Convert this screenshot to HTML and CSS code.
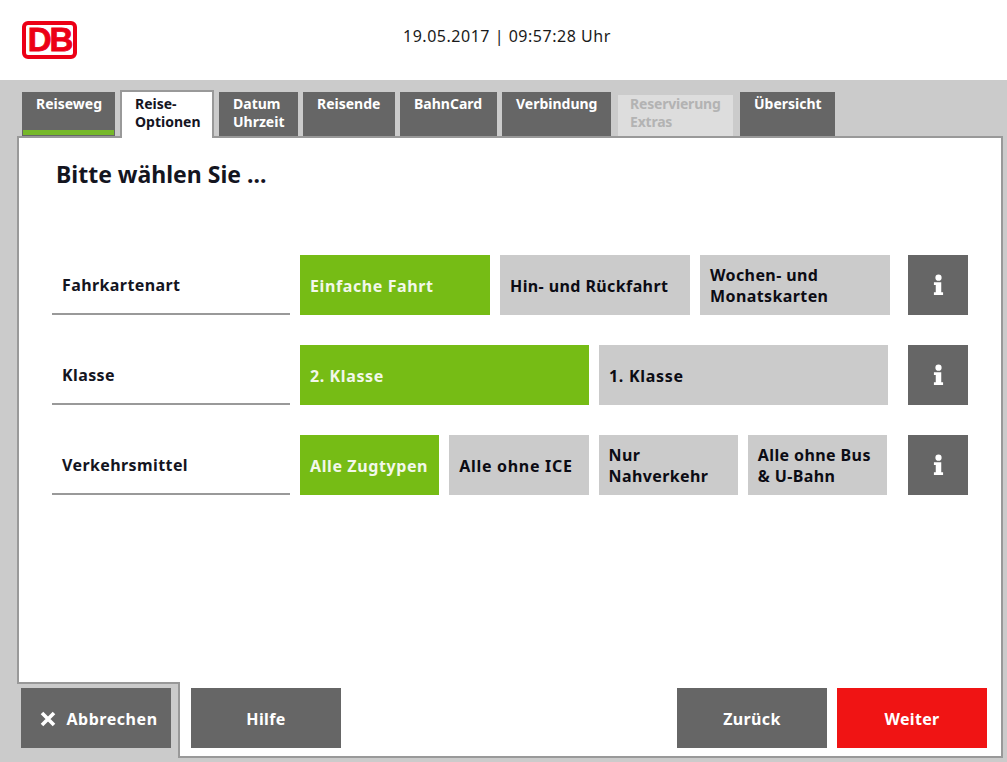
FILE: index.html
```html
<!DOCTYPE html>
<html lang="de">
<head>
<meta charset="utf-8">
<title>Reise-Optionen</title>
<link rel="stylesheet" href="styles.css">
</head>
<body>
<header class="top">
  <div class="logo">DB</div>
  <div class="clock">19.05.2017 | 09:57:28 Uhr</div>
</header>
<nav class="tabs">
  <div class="tab tab-done t1">Reiseweg</div>
  <div class="tab tab-active t2">Reise-<br>Optionen</div>
  <div class="tab t3">Datum<br>Uhrzeit</div>
  <div class="tab t4">Reisende</div>
  <div class="tab t5">BahnCard</div>
  <div class="tab t6">Verbindung</div>
  <div class="tab tab-disabled t7">Reservierung<br>Extras</div>
  <div class="tab t8">Übersicht</div>
</nav>
<main class="panel">
  <div class="notch"></div>
  <h1 class="title">Bitte wählen Sie ...</h1>
  <section class="rows">
    <div class="row">
      <div class="label">Fahrkartenart</div>
      <div class="options wide cols3">
        <div class="opt on single">Einfache Fahrt</div>
        <div class="opt single">Hin- und Rückfahrt</div>
        <div class="opt">Wochen- und<br>Monatskarten</div>
      </div>
      <div class="info"><svg viewBox="0 0 12 24" class="info-icon"><circle cx="6" cy="4" r="3.4"/><path d="M1 9h8v11h2v3H1v-3h2v-8H1z"/></svg></div>
    </div>
    <div class="row">
      <div class="label">Klasse</div>
      <div class="options cols2">
        <div class="opt on single">2. Klasse</div>
        <div class="opt single loose">1. Klasse</div>
      </div>
      <div class="info"><svg viewBox="0 0 12 24" class="info-icon"><circle cx="6" cy="4" r="3.4"/><path d="M1 9h8v11h2v3H1v-3h2v-8H1z"/></svg></div>
    </div>
    <div class="row">
      <div class="label">Verkehrsmittel</div>
      <div class="options cols4">
        <div class="opt on single">Alle Zugtypen</div>
        <div class="opt single loose">Alle ohne ICE</div>
        <div class="opt">Nur<br>Nahverkehr</div>
        <div class="opt">Alle ohne Bus<br>&amp; U-Bahn</div>
      </div>
      <div class="info"><svg viewBox="0 0 12 24" class="info-icon"><circle cx="6" cy="4" r="3.4"/><path d="M1 9h8v11h2v3H1v-3h2v-8H1z"/></svg></div>
    </div>
  </section>
  <footer class="actions">
    <div class="btn btn-cancel"><svg viewBox="0 0 16 16" class="x-icon"><path d="M2 2l12 12M14 2L2 14"/></svg>Abbrechen</div>
    <div class="btn btn-help">Hilfe</div>
    <div class="btn btn-back">Zurück</div>
    <div class="btn btn-next">Weiter</div>
  </footer>
</main>
</body>
</html>
```
FILE: styles.css
```css
* { box-sizing: border-box; }
html, body { margin: 0; padding: 0; height: 762px; overflow: hidden; }
body { background: #cbcbcb; font-family: "Noto Sans", "Liberation Sans", sans-serif; color: #14151f; }

.top { height: 80px; background: #fff; display: flex; align-items: center; position: relative; padding-left: 22px; }
.logo { width: 55px; height: 38px; margin-top: -1px; border: 4px solid #ec0016; border-radius: 6px; background: #fff; display: flex; align-items: center; justify-content: center; font: 700 33px/30px "Liberation Sans", sans-serif; letter-spacing: -2px; color: #ec0016; -webkit-text-stroke: 0.8px #ec0016; }
.clock { position: absolute; left: 403px; top: 25px; font-size: 16px; line-height: 22px; letter-spacing: 0.52px; color: #1a1a1a; }

.tabs { display: flex; align-items: flex-start; height: 56px; padding: 10px 0 0 22px; gap: 5px; position: relative; z-index: 1; font-weight: 700; font-size: 14px; line-height: 18px; }
.tab { height: 46px; margin-top: 2px; background: #666; color: #fff; padding: 3px 0 0 14px; }
.t1 { width: 93px; } .t2 { width: 94px; } .t3 { width: 79px; } .t4 { width: 92px; }
.t5 { width: 97px; } .t6 { width: 109px; } .t7 { width: 115px; margin-left: 2px; } .t8 { width: 95px; margin-left: 2px; }
.tab-done { height: 44px; position: relative; }
.tab-done::after { content: ""; position: absolute; left: 1px; right: 1px; top: 38px; height: 5px; background: #76b82a; }
.t3, .t4, .t5, .t6, .t8 { height: 44px; }
.tab-active { height: 48px; margin-top: 0; background: #fff; color: #14151f; border: 2px solid #999; border-bottom: 0; padding: 3px 0 0 13px; }
.tab-disabled { height: 41px; margin-top: 5px; background: #ddd; color: #b3b3b3; padding: 0 0 0 12px; letter-spacing: -0.2px; }

.panel { position: relative; margin-left: 17px; width: 986px; height: 622px; background: #fff; border: 2px solid #999; display: flex; flex-direction: column; }
.notch { position: absolute; left: -2px; bottom: -2px; width: 163px; height: 76px; background: #cbcbcb; border-top: 2px solid #999; border-right: 2px solid #999; }

.title { margin: 0; padding: 19px 0 0 37px; font-size: 23px; line-height: 34px; font-weight: 700; color: #14151f; }

.rows { flex: 1; display: flex; flex-direction: column; gap: 30px; padding: 64px 0 0 33px; }
.row { display: flex; width: 916px; height: 60px; font-size: 16px; font-weight: 700; line-height: 21px; letter-spacing: 0.4px; }
.label { width: 238px; margin-right: 10px; padding: 20px 0 0 10px; border-bottom: 2px solid #999; color: #14151f; height: 60px; }
.options { display: grid; width: 588px; gap: 10px; }
.wide { width: 590px; }
.cols2 { grid-template-columns: repeat(2, 1fr); width: 588px; }
.cols3 { grid-template-columns: repeat(3, 1fr); }
.cols4 { grid-template-columns: repeat(4, 1fr); width: 587px; }
.opt { background: #cbcbcb; color: #0c0c14; display: flex; align-items: center; padding: 1px 0 0 10px; }
.single { padding-top: 3px; }
.loose { letter-spacing: 0.7px; }
.on { background: #76bc15; color: #f2f7ea; letter-spacing: 0.6px; }
.info { width: 60px; margin-left: auto; background: #666; display: flex; align-items: center; justify-content: center; }
.info-icon { width: 11px; height: 22px; fill: #fff; }

.actions { position: relative; display: flex; gap: 10px; padding: 0 14px 8px 2px; font-size: 16px; font-weight: 700; color: #fff; letter-spacing: 0.35px; }
.btn { width: 150px; height: 60px; background: #666; display: flex; align-items: center; justify-content: center; padding-top: 1px; }
.btn-cancel { margin-right: 10px; letter-spacing: 0.55px; padding-left: 6px; }
.btn-back { margin-left: auto; }
.btn-next { background: #f01414; }
.x-icon { width: 16px; height: 16px; margin-right: 10px; fill: none; stroke: #fff; stroke-width: 3.6; }
```
